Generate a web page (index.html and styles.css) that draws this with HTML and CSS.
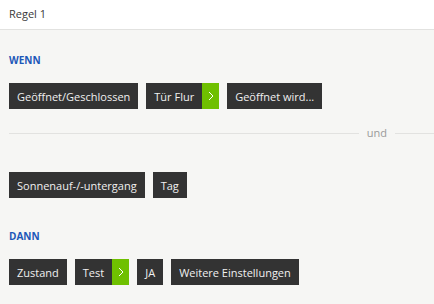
FILE: index.html
```html
<!DOCTYPE html>
<html>
<head>
<meta charset="utf-8">
<link rel="stylesheet" href="styles.css">
</head>
<body>
<div class="header">Regel 1</div>
<div class="content">
  <div class="title title-wenn">WENN</div>
  <div class="row">
    <span class="btn">Geöffnet/Geschlossen</span>
    <span class="btn btn-split"><span class="btn-label">Tür Flur</span><span class="chev"><svg width="6" height="10" viewBox="0 0 6 10"><path d="M1 1 L5 5 L1 9" fill="none" stroke="#fff" stroke-width="1"/></svg></span></span>
    <span class="btn">Geöffnet wird...</span>
  </div>
  <div class="divider"><span class="line"></span><span class="und">und</span><span class="line line-end"></span></div>
  <div class="row row-second">
    <span class="btn">Sonnenauf-/-untergang</span>
    <span class="btn">Tag</span>
  </div>
  <div class="title title-dann">DANN</div>
  <div class="row">
    <span class="btn">Zustand</span>
    <span class="btn btn-split"><span class="btn-label">Test</span><span class="chev"><svg width="6" height="10" viewBox="0 0 6 10"><path d="M1 1 L5 5 L1 9" fill="none" stroke="#fff" stroke-width="1"/></svg></span></span>
    <span class="btn">JA</span>
    <span class="btn">Weitere Einstellungen</span>
  </div>
</div>
</body>
</html>
```
FILE: styles.css
```css
html, body {
  margin: 0;
  padding: 0;
}
body {
  background: #f6f6f4;
  font-family: "Open Sans", "Liberation Sans", sans-serif;
  font-size: 11px;
  color: #333;
  width: 434px;
  height: 304px;
  overflow: hidden;
}
.header {
  background: #fff;
  height: 29px;
  line-height: 28px;
  padding-left: 9px;
  border-bottom: 1px solid #e2e2e0;
  color: #3a3a3a;
}
.content {
  padding-left: 9px;
}
.title {
  font-size: 10px;
  font-weight: 700;
  color: #1d58b8;
  line-height: 14px;
}
.title-wenn {
  margin-top: 23px;
}
.title-dann {
  margin-top: 31px;
}
.row {
  display: flex;
  gap: 8px;
  margin-top: 16px;
}
.row-second {
  margin-top: 32px;
}
.btn {
  display: flex;
  align-items: center;
  height: 26px;
  padding: 0 8px;
  background: #333333;
  color: #f0f0f0;
  white-space: nowrap;
}
.btn-split {
  padding: 0;
}
.btn-label {
  padding: 0 8px;
}
.chev {
  width: 17px;
  height: 26px;
  background: #6fc000;
  display: flex;
  align-items: center;
  justify-content: center;
}
.chev svg {
  display: block;
}
.divider {
  display: flex;
  align-items: center;
  margin-top: 17px;
  height: 14px;
}
.line {
  flex: 1;
  height: 1px;
  background: #e2e2e0;
}
.line-end {
  flex: none;
  width: 39px;
}
.und {
  color: #9a9a9a;
  padding: 0 8px;
  line-height: 14px;
}
```
